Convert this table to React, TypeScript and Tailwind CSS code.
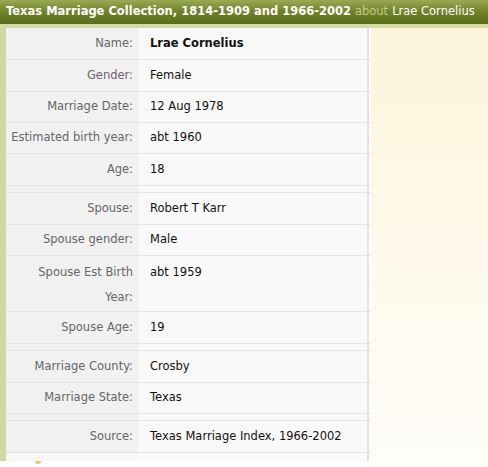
import React from "react";

type Row = { label: string; value?: string; bold?: boolean; h: string; spacer?: boolean; top?: boolean };

const rows: Row[] = [
  { label: "Name:", value: "Lrae Cornelius", bold: true, h: "h-[32px]" },
  { label: "Gender:", value: "Female", h: "h-[32px]" },
  { label: "Marriage Date:", value: "12 Aug 1978", h: "h-[31px]" },
  { label: "Estimated birth year:", value: "abt 1960", h: "h-[31px]" },
  { label: "Age:", value: "18", h: "h-[32px]" },
  { label: "", spacer: true, h: "h-[7px]" },
  { label: "Spouse:", value: "Robert T Karr", h: "h-[32px]" },
  { label: "Spouse gender:", value: "Male", h: "h-[31px]" },
  { label: "Spouse Est Birth Year:", value: "abt 1959", h: "h-[56px]", top: true },
  { label: "Spouse Age:", value: "19", h: "h-[32px]" },
  { label: "", spacer: true, h: "h-[7px]" },
  { label: "Marriage County:", value: "Crosby", h: "h-[32px]" },
  { label: "Marriage State:", value: "Texas", h: "h-[31px]" },
  { label: "", spacer: true, h: "h-[7px]" },
  { label: "Source:", value: "Texas Marriage Index, 1966-2002", h: "h-[32px]" },
];

export default function App() {
  return (
    <div className="w-[488px] h-[467px] bg-white overflow-hidden font-['Verdana','DejaVu_Sans',sans-serif] text-[11.5px]">
      <div className="h-[24px] bg-gradient-to-b from-[#9aa954] via-[#6f8128] to-[#5b6c1c] flex items-center pl-[6px] text-[11.5px] text-white whitespace-nowrap">
        <span className="font-bold">Texas Marriage Collection, 1814-1909 and 1966-2002</span>
        <span className="text-[#c3cc8c] ml-[4px]">about</span>
        <span className="ml-[4px]">Lrae Cornelius</span>
      </div>
      <div className="h-[4px] bg-[#d2dba5]" />
      <div className="flex">
        <div className="w-[371px] flex flex-col">
          <div className="border-l-[6px] border-[#d0daa0]">
            {rows.map((r, i) => (
              <div key={i} className={`flex ${r.h} border-b border-[#e4e4e4]`}>
                {r.top ? (
                  <div className="w-[132px] bg-[#f1f1f1] text-[#666666] text-right pl-[8px] pr-[5px] pt-[4px] leading-[25px]">
                    {r.label}
                  </div>
                ) : (
                  <div className="w-[132px] bg-[#f1f1f1] text-[#666666] pr-[5px] flex items-center justify-end whitespace-nowrap">
                    {r.label}
                  </div>
                )}
                <div
                  className={`w-[231px] bg-[#f9f9f9] text-[#111111] pl-[12px] border-r-2 border-[#e2e2e2] flex whitespace-nowrap ${r.top ? "items-start pt-[4px] leading-[25px]" : "items-center"} ${r.bold ? "font-bold" : ""}`}
                >
                  {r.value}
                </div>
              </div>
            ))}
            <div className="flex h-[8px]">
              <div className="w-[132px] bg-[#f8f8f8]" />
              <div className="w-[231px] bg-[#fbfbfb] border-r-2 border-[#e2e2e2]" />
            </div>
          </div>
          <div className="relative h-[6px] bg-white">
            <div className="absolute left-[35px] top-0 w-[6px] h-[3px] rounded-b-full bg-[#e7c98a]" />
          </div>
        </div>
        <div className="flex-1 bg-gradient-to-b from-[#fdf5da] via-[#fef9ea] to-[#fffdf9]" />
      </div>
    </div>
  );
}
